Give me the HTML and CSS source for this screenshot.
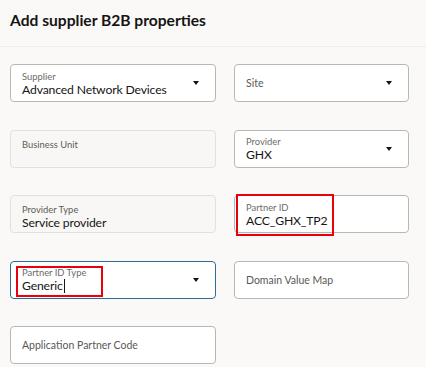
FILE: index.html
```html
<!DOCTYPE html>
<html lang="en">
<head>
    <meta charset="UTF-8">
    <meta name="viewport" content="width=device-width, initial-scale=1.0">
    <title>Add supplier B2B properties</title>
    <link rel="stylesheet" href="styles.css">
</head>
<body>
    <div class="page-header">
        <h1>Add supplier B2B properties</h1>
    </div>

    <div class="form-grid">
        <!-- Row 1 -->
        <div class="field select">
            <span class="field-label">Supplier</span>
            <span class="field-value">Advanced Network Devices</span>
            <span class="caret"></span>
        </div>
        <div class="field select empty">
            <span class="field-label">Site</span>
            <span class="caret"></span>
        </div>

        <!-- Row 2 -->
        <div class="field readonly">
            <span class="field-label">Business Unit</span>
        </div>
        <div class="field select">
            <span class="field-label">Provider</span>
            <span class="field-value">GHX</span>
            <span class="caret"></span>
        </div>

        <!-- Row 3 -->
        <div class="field readonly">
            <span class="field-label">Provider Type</span>
            <span class="field-value">Service provider</span>
        </div>
        <div class="field">
            <span class="field-label">Partner ID</span>
            <span class="field-value">ACC_GHX_TP2</span>
            <span class="highlight highlight-id"></span>
        </div>

        <!-- Row 4 -->
        <div class="field select focused">
            <span class="field-label">Partner ID Type</span>
            <span class="field-value">Generic<span class="cursor"></span></span>
            <span class="caret"></span>
            <span class="highlight highlight-type"></span>
        </div>
        <div class="field empty">
            <span class="field-label">Domain Value Map</span>
        </div>

        <!-- Row 5 -->
        <div class="field empty">
            <span class="field-label">Application Partner Code</span>
        </div>
    </div>
</body>
</html>
```

FILE: styles.css
```css
body {
    margin: 0;
    background-color: #faf9f8;
    font-family: Lato, "Noto Sans", sans-serif;
    color: #161513;
}
.page-header {
    height: 47px;
    border-bottom: 1px solid #eeedeb;
    padding: 0 10px;
    box-sizing: border-box;
}
h1 {
    margin: 0;
    padding-top: 10px;
    font-size: 15.6px;
    font-weight: bold;
    line-height: 20px;
    color: #161513;
}
.form-grid {
    display: grid;
    grid-template-columns: 206px 175px;
    grid-auto-rows: 38px;
    column-gap: 18px;
    row-gap: 27.5px;
    padding: 17px 0 0 10px;
}
.field {
    position: relative;
    display: flex;
    flex-direction: column;
    justify-content: center;
    padding: 1px 30px 0 11px;
    background-color: #fff;
    border: 1px solid #b9b7b4;
    border-radius: 4px;
    box-sizing: border-box;
}
.field-label {
    font-size: 9.4px;
    line-height: 11px;
    color: #6d6b68;
}
.field-value {
    font-size: 12.2px;
    line-height: 15px;
    letter-spacing: -0.15px;
    color: #161513;
    white-space: nowrap;
}
.empty .field-label {
    font-size: 10.5px;
    line-height: 13px;
    color: #5a5855;
}
.readonly {
    background-color: #f8f7f5;
    border-color: #e2e0dd;
    justify-content: flex-start;
    padding-top: 8px;
}
.readonly .field-label {
    color: #5e5c59;
}
.focused {
    border-color: #2b6c93;
}
.caret {
    position: absolute;
    right: 16px;
    top: 50%;
    margin-top: -2px;
    width: 0;
    height: 0;
    border-left: 3.5px solid transparent;
    border-right: 3.5px solid transparent;
    border-top: 4px solid #161513;
}
.cursor {
    display: inline-block;
    width: 1px;
    height: 14px;
    margin-left: 1px;
    background-color: #161513;
    vertical-align: -3px;
}
.highlight {
    position: absolute;
    border: 2px solid #e8000b;
    box-sizing: border-box;
    pointer-events: none;
}
.highlight-id {
    left: 1px;
    top: -2px;
    width: 98px;
    height: 42px;
}
.highlight-type {
    left: 5px;
    top: 4px;
    width: 87px;
    height: 31px;
}
```
